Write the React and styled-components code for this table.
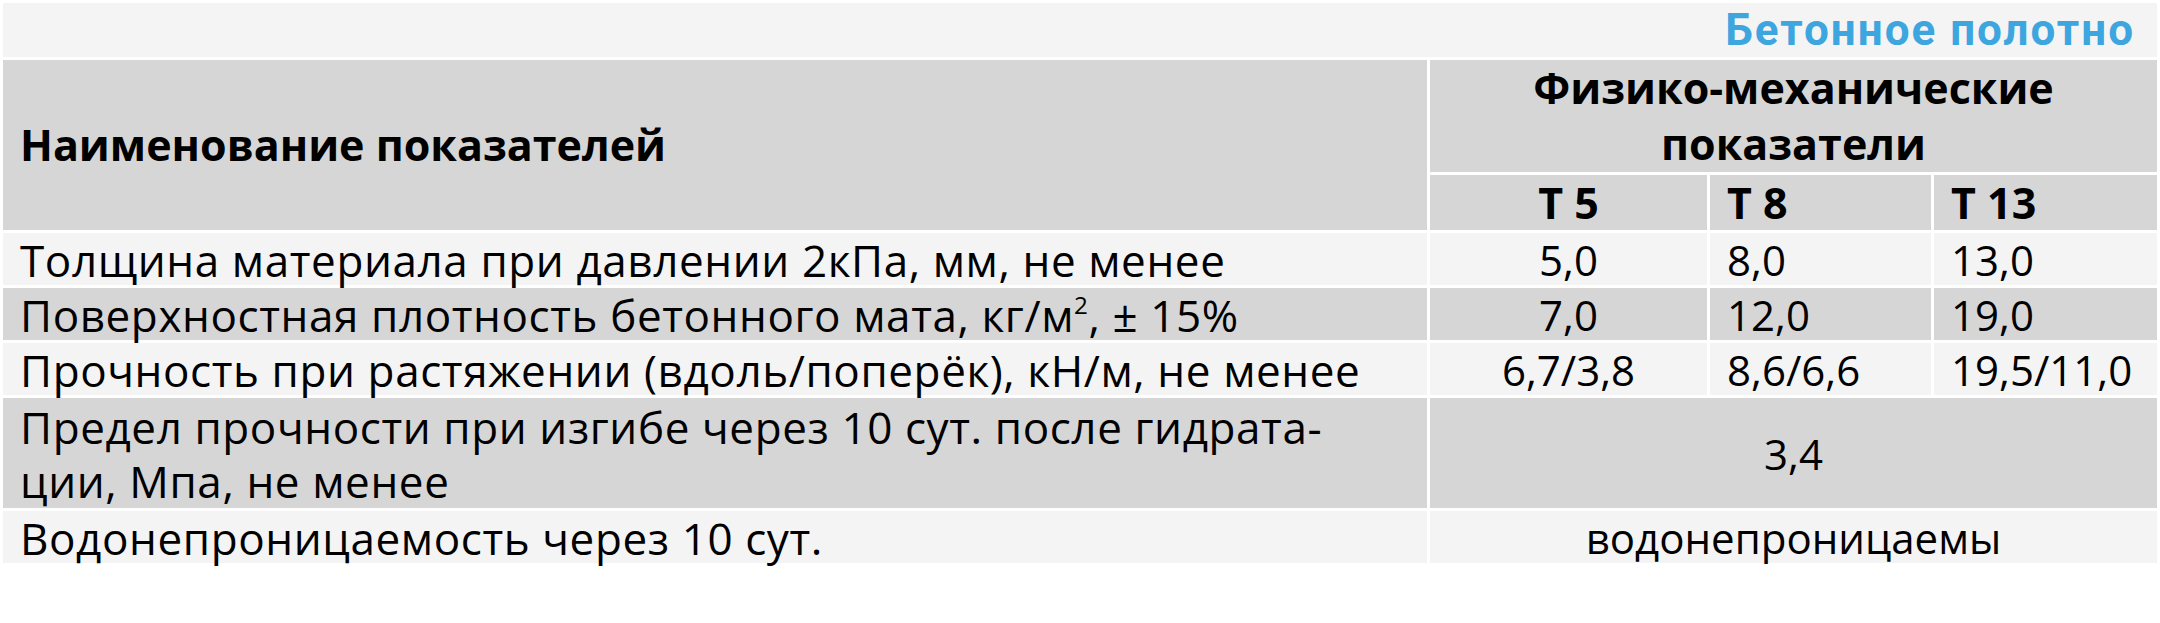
import React from "react";
import styled, { createGlobalStyle } from "styled-components";

const GlobalStyle = createGlobalStyle`
  html, body {
    margin: 0;
    padding: 0;
    background: #ffffff;
  }
  body {
    font-family: "Open Sans", Lato, "Noto Sans", sans-serif;
    color: #000000;
  }
`;

const SpecTable = () => {
  const rows = [
    {
      name: <>Толщина материала при давлении 2кПа, мм, не менее</>,
      values: ["5,0", "8,0", "13,0"],
    },
    {
      name: (
        <>
          Поверхностная плотность бетонного мата, кг/м<Sup>2</Sup>, ± 15%
        </>
      ),
      values: ["7,0", "12,0", "19,0"],
      shade: true,
    },
    {
      name: <>Прочность при растяжении (вдоль/поперёк), кН/м, не менее</>,
      values: ["6,7/3,8", "8,6/6,6", "19,5/11,0"],
    },
    {
      name: (
        <>
          Предел прочности при изгибе через 10 сут. после гидрата-
          <br />
          ции, Мпа, не менее
        </>
      ),
      merged: "3,4",
      shade: true,
      tall: true,
    },
    {
      name: <>Водонепроницаемость через 10 сут.</>,
      merged: "водонепроницаемы",
    },
  ];

  return (
    <Page>
      <GlobalStyle />
      <Table>
        <colgroup>
          <col style={{ width: "1424px" }} />
          <col style={{ width: "277px" }} />
          <col style={{ width: "221px" }} />
          <col />
        </colgroup>
        <tbody>
          <Row>
            <BandCell colSpan={4}>Бетонное полотно</BandCell>
          </Row>
          <Row $shade>
            <HeadName rowSpan={2}>Наименование показателей</HeadName>
            <HeadGroup colSpan={3}>
              Физико-механические
              <br />
              показатели
            </HeadGroup>
          </Row>
          <Row $shade>
            <HeadType $align="center">Т 5</HeadType>
            <HeadType>Т 8</HeadType>
            <HeadType>Т 13</HeadType>
          </Row>
          {rows.map((row, i) => (
            <Row key={i} $shade={row.shade}>
              <NameCell $tall={row.tall}>{row.name}</NameCell>
              {row.merged ? (
                <ValueCell colSpan={3} $align="center">
                  {row.merged}
                </ValueCell>
              ) : (
                row.values.map((v, j) => (
                  <ValueCell key={j} $align={j === 0 ? "center" : "left"}>
                    {v}
                  </ValueCell>
                ))
              )}
            </Row>
          ))}
        </tbody>
      </Table>
    </Page>
  );
};

const Page = styled.div`
  width: 2160px;
`;

const Table = styled.table`
  width: 2160px;
  table-layout: fixed;
  border-collapse: separate;
  border-spacing: 3px;
  background: #ffffff;
`;

const Row = styled.tr`
  & > td,
  & > th {
    background: ${(p) => (p.$shade ? "#d6d6d6" : "#f4f4f4")};
  }
`;

const BandCell = styled.td`
  height: 54px;
  padding: 0 22px 0 0;
  text-align: right;
  vertical-align: middle;
  font-family: Roboto, "Noto Sans", sans-serif;
  font-weight: 700;
  font-size: 44px;
  letter-spacing: 2px;
  color: #3ea6df;
  line-height: 54px;
`;

const HeadName = styled.th`
  padding: 0 17px;
  text-align: left;
  vertical-align: middle;
  font-weight: 700;
  font-size: 43px;
  line-height: 52px;
`;

const HeadGroup = styled.th`
  height: 110px;
  padding: 0;
  text-align: center;
  vertical-align: top;
  font-weight: 700;
  font-size: 43px;
  line-height: 56px;
`;

const HeadType = styled.th`
  height: 55px;
  padding: 0 17px;
  text-align: ${(p) => p.$align || "left"};
  vertical-align: middle;
  font-weight: 700;
  font-size: 43px;
  line-height: 52px;
`;

const NameCell = styled.td`
  padding: 3px 17px 0;
  text-align: left;
  vertical-align: middle;
  font-size: 44px;
  letter-spacing: 0.6px;
  line-height: ${(p) => (p.$tall ? "53.5px" : "49px")};
  white-space: nowrap;
`;

const ValueCell = styled.td`
  padding: 2px 17px 0;
  text-align: ${(p) => p.$align || "left"};
  vertical-align: middle;
  font-size: 42px;
  line-height: 50px;
  white-space: nowrap;
`;

const Sup = styled.sup`
  font-size: 0.55em;
  line-height: 0;
  vertical-align: 0.75em;
`;

export default SpecTable;
